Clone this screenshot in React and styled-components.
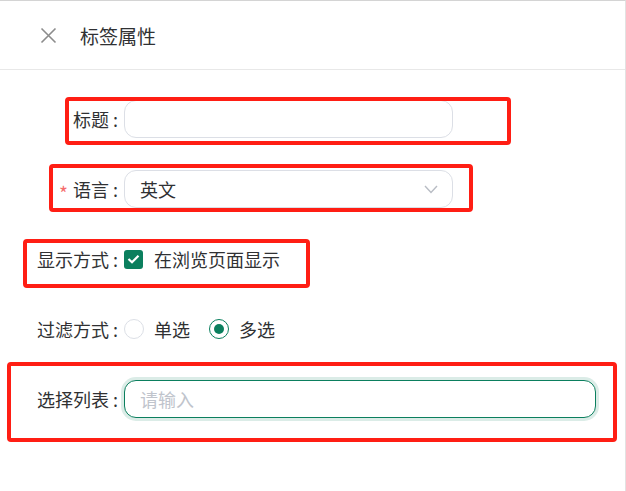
import React from "react";
import styled, { createGlobalStyle } from "styled-components";

const GREEN = "#0b7f5e";
const FONT = `"Noto Sans CJK SC", "Noto Sans", sans-serif`;

const GlobalStyle = createGlobalStyle`
  body {
    margin: 0;
    background: #fff;
    font-family: ${FONT};
  }
`;

const Panel = styled.div`
  width: 626px;
  height: 491px;
  box-sizing: border-box;
  border-top: 1px solid #d4d4d4;
  border-right: 1px solid #e2e2e2;
  background: #fff;
  color: #303133;
`;

const Header = styled.div`
  display: flex;
  align-items: center;
  height: 68px;
  padding-left: 40px;
  border-bottom: 1px solid #e8e8e8;
`;

const CloseButton = styled.button`
  display: flex;
  padding: 0;
  border: none;
  background: transparent;
  cursor: pointer;
  margin-right: 23px;
`;

const Title = styled.h1`
  margin: 0;
  font-size: 19px;
  font-weight: 400;
  color: #303133;
`;

const Form = styled.form`
  display: flex;
  flex-direction: column;
  gap: 32px;
  padding-top: 30px;
`;

const Row = styled.div`
  position: relative;
  display: flex;
  align-items: center;
  height: 38px;
`;

const Mark = styled.div`
  position: absolute;
  box-sizing: border-box;
  border: 4px solid #ff1e14;
  border-radius: 4px;
  pointer-events: none;
`;

const Label = styled.label`
  display: flex;
  justify-content: flex-end;
  align-items: center;
  width: 118px;
  margin-right: 6px;
  font-size: 18px;
  white-space: nowrap;

  &::after {
    content: ":";
    margin-left: 4px;
  }
`;

const Required = styled.span`
  color: #f56c6c;
  font-size: 19px;
  line-height: 1;
  margin: 6px 5px 0 0;
`;

const TextInput = styled.input`
  box-sizing: border-box;
  width: ${({ wide }) => (wide ? "472px" : "329px")};
  height: 38px;
  padding: 0 15px;
  border: 1px solid ${({ focused }) => (focused ? GREEN : "#dcdfe6")};
  border-radius: 12px;
  box-shadow: ${({ focused }) =>
    focused ? "0 0 0 3px rgba(11, 127, 94, 0.15)" : "none"};
  outline: none;
  font-family: ${FONT};
  font-size: 18px;
  color: #303133;

  &::placeholder {
    color: #c0c4cc;
  }
`;

const Select = styled.div`
  box-sizing: border-box;
  display: flex;
  align-items: center;
  justify-content: space-between;
  width: 329px;
  height: 38px;
  padding: 0 14px 0 15px;
  border: 1px solid #dcdfe6;
  border-radius: 12px;
  font-size: 18px;
`;

const Option = styled.label`
  display: flex;
  align-items: center;
  font-size: 18px;
  margin-right: ${({ last }) => (last ? "0" : "19px")};
  cursor: pointer;
`;

const CheckBox = styled.span`
  box-sizing: border-box;
  display: flex;
  align-items: center;
  justify-content: center;
  width: 19px;
  height: 19px;
  margin-right: 11px;
  border-radius: 3px;
  background: ${GREEN};
`;

const Radio = styled.span`
  box-sizing: border-box;
  display: flex;
  align-items: center;
  justify-content: center;
  width: 20px;
  height: 20px;
  margin-right: 10px;
  border-radius: 50%;
  border: 1px solid ${({ checked }) => (checked ? GREEN : "#dcdfe6")};

  &::after {
    content: "";
    width: 10px;
    height: 10px;
    border-radius: 50%;
    background: ${({ checked }) => (checked ? GREEN : "transparent")};
  }
`;

const CloseIcon = () => (
  <svg width="17" height="17" viewBox="0 0 17 17">
    <path d="M1.5 1.5 L15.5 15.5 M15.5 1.5 L1.5 15.5" stroke="#8c8c8c" strokeWidth="1.6" />
  </svg>
);

const ChevronIcon = () => (
  <svg width="14" height="9" viewBox="0 0 14 9">
    <path d="M1 1 L7 7.5 L13 1" fill="none" stroke="#b8bcc4" strokeWidth="1.4" />
  </svg>
);

const CheckIcon = () => (
  <svg width="13" height="10" viewBox="0 0 13 10">
    <path d="M1.5 5 L5 8.3 L11.5 1.7" fill="none" stroke="#fff" strokeWidth="2.2" />
  </svg>
);

const App = () => (
  <>
    <GlobalStyle />
    <Panel>
      <Header>
        <CloseButton type="button">
          <CloseIcon />
        </CloseButton>
        <Title>标签属性</Title>
      </Header>
      <Form>
        <Row>
          <Mark style={{ left: 65, top: -3, width: 446, height: 48 }} />
          <Label>标题</Label>
          <TextInput />
        </Row>
        <Row>
          <Mark style={{ left: 49, top: -6, width: 424, height: 48 }} />
          <Label>
            <Required>*</Required>语言
          </Label>
          <Select>
            <span>英文</span>
            <ChevronIcon />
          </Select>
        </Row>
        <Row>
          <Mark style={{ left: 23, top: -1, width: 287, height: 49 }} />
          <Label>显示方式</Label>
          <Option last>
            <CheckBox>
              <CheckIcon />
            </CheckBox>
            在浏览页面显示
          </Option>
        </Row>
        <Row>
          <Label>过滤方式</Label>
          <Option>
            <Radio />
            单选
          </Option>
          <Option last>
            <Radio checked />
            多选
          </Option>
        </Row>
        <Row>
          <Mark style={{ left: 7, top: -18, width: 610, height: 80 }} />
          <Label>选择列表</Label>
          <TextInput wide focused placeholder="请输入" />
        </Row>
      </Form>
    </Panel>
  </>
);

export default App;
